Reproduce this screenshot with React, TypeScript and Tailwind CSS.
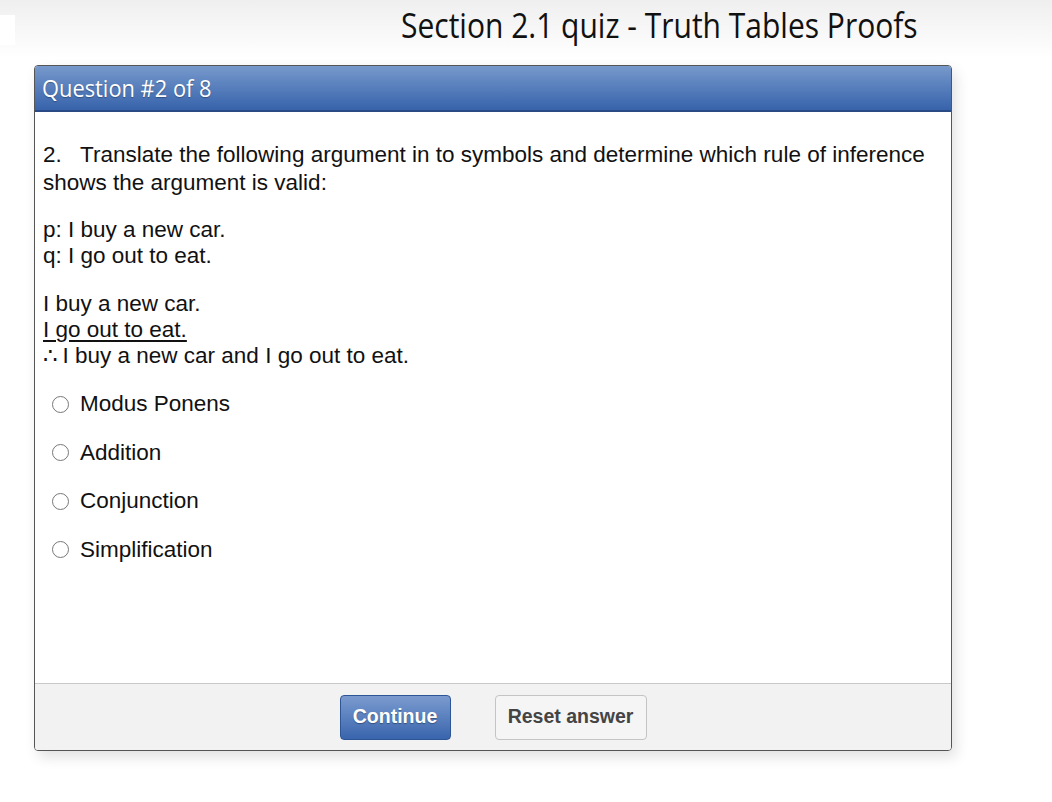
import React from "react";

const options = ["Modus Ponens", "Addition", "Conjunction", "Simplification"];

export default function App() {
  return (
    <div className="w-[1052px] h-[802px] bg-white relative overflow-hidden">
      <div className="h-[58px] bg-gradient-to-b from-[#efefef] to-white flex items-start">
        <div className="w-[15px] h-[30px] bg-white mt-[15px]" />
        <div className="pl-[386px] pt-[1px]">
          <div className="text-[#111] whitespace-nowrap origin-left scale-x-[0.857] font-['Open_Sans',sans-serif] text-[35px] leading-[48px]">
            Section 2.1 quiz - Truth Tables Proofs
          </div>
        </div>
      </div>
      <div className="ml-[34px] mt-[7px] w-[918px] h-[686px] border border-[#555] rounded-[4px] flex flex-col overflow-hidden shadow-[4px_6px_14px_rgba(0,0,0,0.12)]">
        <div className="h-[46px] shrink-0 bg-gradient-to-b from-[#7799cc] to-[#3763ab] border-b-2 border-[#2a4a86] flex items-center pl-[7px]">
          <span className="text-white font-['Open_Sans',sans-serif] text-[23px] origin-left scale-x-[0.95] whitespace-nowrap [text-shadow:0_1px_1px_rgba(0,0,0,0.3)]">
            Question #2 of 8
          </span>
        </div>
        <div className="flex-1 bg-white pl-[8px] pr-[12px] pt-[29px] font-['Liberation_Sans',Arial,sans-serif] text-[22.5px] leading-[26px] text-[#111]">
          <p className="leading-[28px]">2.&nbsp;&nbsp; Translate the following argument in to symbols and determine which rule of inference shows the argument is valid:</p>
          <div className="mt-[20px]">
            <p>p: I buy a new car.</p>
            <p>q: I go out to eat.</p>
          </div>
          <div className="mt-[22px]">
            <p>I buy a new car.</p>
            <p className="underline underline-offset-[3px]">I go out to eat.</p>
            <p>∴&#8201;I buy a new car and I go out to eat.</p>
          </div>
          <div className="mt-[11px] flex flex-col">
            {options.map((o) => (
              <div key={o} className="h-[48.5px] flex items-center pl-[9px]">
                <span className="w-[17px] h-[17px] rounded-full border border-[#777] bg-white shrink-0" />
                <span className="ml-[11px]">{o}</span>
              </div>
            ))}
          </div>
        </div>
        <div className="h-[67px] shrink-0 bg-[#f2f2f2] border-t border-[#c8c8c8] flex items-center justify-center gap-[44px] font-['Liberation_Sans',Arial,sans-serif] font-bold text-[19.5px]">
          <button className="w-[111px] h-[45px] rounded-[4px] border border-[#2e5596] bg-gradient-to-b from-[#7b9bcf] to-[#3965ad] text-white [text-shadow:0_1px_1px_rgba(0,0,0,0.35)]">
            Continue
          </button>
          <button className="w-[152px] h-[45px] rounded-[4px] border border-[#c4c4c4] bg-[#f5f5f5] text-[#444]">
            Reset answer
          </button>
        </div>
      </div>
    </div>
  );
}
